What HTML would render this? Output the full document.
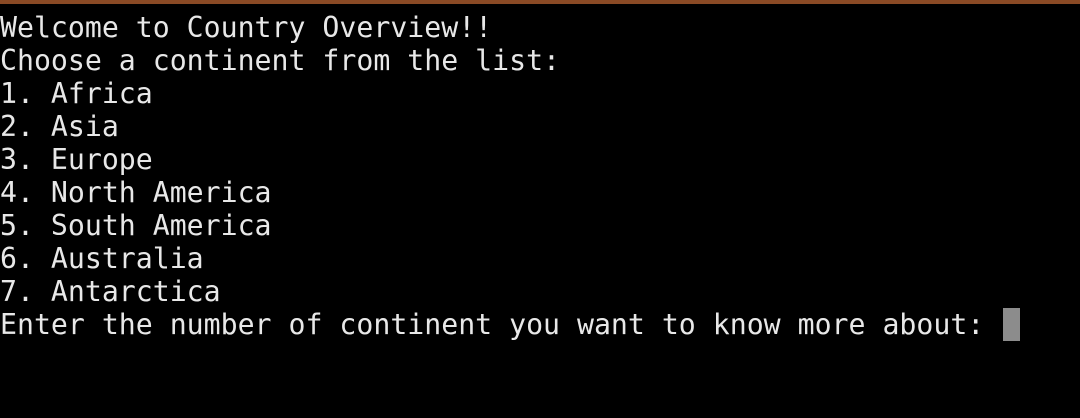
<!DOCTYPE html>
<html><head><style>
html,body{margin:0;padding:0;background:#000;width:1080px;height:418px;overflow:hidden}
.bar{position:absolute;left:0;top:0;width:1080px;height:4px;background:#8a4a25}
pre{position:absolute;left:0;top:11px;margin:0;font-family:"DejaVu Sans Mono","Liberation Mono",monospace;font-size:28.2px;line-height:33px;color:#e8e8e8}
.cur{position:absolute;left:1003px;top:308px;width:17px;height:33px;background:#8c8c8c}
</style></head><body>
<div class="bar"></div>
<pre>Welcome to Country Overview!!
Choose a continent from the list:
1. Africa
2. Asia
3. Europe
4. North America
5. South America
6. Australia
7. Antarctica
Enter the number of continent you want to know more about: </pre>
<div class="cur"></div>
</body></html>
